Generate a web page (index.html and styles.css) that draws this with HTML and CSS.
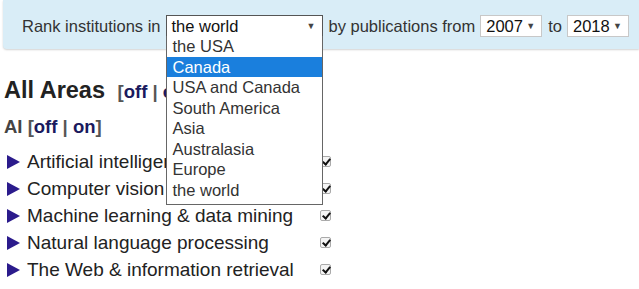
FILE: index.html
```html
<!DOCTYPE html>
<html>
<head>
<meta charset="utf-8">
<link rel="stylesheet" href="styles.css">
</head>
<body>
<div class="bar">
  <span class="label">Rank institutions in</span>
  <div class="sel region open">
    <span class="val">the world</span><span class="arrow">▼</span>
    <ul class="menu">
      <li>the USA</li>
      <li class="hl">Canada</li>
      <li>USA and Canada</li>
      <li>South America</li>
      <li>Asia</li>
      <li>Australasia</li>
      <li>Europe</li>
      <li>the world</li>
    </ul>
  </div>
  <span class="label">by publications from</span>
  <div class="sel year"><span class="val">2007</span><span class="arrow">▼</span></div>
  <span class="label">to</span>
  <div class="sel year"><span class="val">2018</span><span class="arrow">▼</span></div>
</div>
<div class="main">
  <h2 class="title">All Areas <span class="toggle">[<a>off</a> | <a>on</a>]</span></h2>
  <div class="sub">AI <span class="toggle">[<a>off</a> | <a>on</a>]</span></div>
  <ul class="areas">
    <li><span class="tri"></span><span class="name">Artificial intelligence</span><span class="cb"></span></li>
    <li><span class="tri"></span><span class="name">Computer vision</span><span class="cb"></span></li>
    <li><span class="tri"></span><span class="name">Machine learning &amp; data mining</span><span class="cb"></span></li>
    <li><span class="tri"></span><span class="name">Natural language processing</span><span class="cb"></span></li>
    <li><span class="tri"></span><span class="name">The Web &amp; information retrieval</span><span class="cb"></span></li>
  </ul>
</div>
</body>
</html>
```
FILE: styles.css
```css
* { box-sizing: border-box; }
body {
  margin: 0;
  font-family: "Liberation Sans", Arial, sans-serif;
  color: #222;
  background: #fff;
  overflow: hidden;
}
.bar {
  margin-left: 3px;
  height: 49px;
  background: #d9edf7;
  border-bottom-left-radius: 4px;
  box-shadow: 0 1px 2px rgba(0,0,0,0.18);
  display: flex;
  align-items: center;
  padding: 3px 0 0 19px;
  font-size: 16.5px;
  color: #333;
  position: relative;
  z-index: 2;
}
.label { margin-right: 5px; }
.sel {
  position: relative;
  display: flex;
  align-items: center;
  justify-content: space-between;
  height: 22px;
  background: #fff;
  border: 1px solid #c8c8c8;
  padding: 0 6px 0 5px;
  margin-right: 6px;
  font-size: 16.5px;
  color: #111;
}
.region { width: 157px; border-color: #555; }
.year { width: 62px; }
.arrow { font-size: 9px; color: #444; }
.menu {
  position: absolute;
  top: 20px;
  left: -1px;
  width: 157px;
  margin: 0;
  padding: 0 0 3px 0;
  list-style: none;
  background: #fff;
  border: 1px solid #666;
  border-top: none;
  z-index: 5;
}
.menu li {
  height: 20.57px;
  line-height: 20.5px;
  padding-left: 6px;
  color: #333;
}
.menu li.hl { background: #1a7fdd; color: #fff; }
.main { padding: 0 0 0 4px; }
.title {
  margin: 27px 0 0 0;
  font-size: 23.5px;
  font-weight: bold;
  color: #222;
  line-height: 28px;
}
.toggle { font-size: 18.5px; margin-left: 6px; color: #555; }
.toggle a { color: #1a1a5e; }
.sub {
  margin-top: 10px;
  font-size: 18.5px;
  font-weight: bold;
  color: #444;
  line-height: 22px;
}
.sub .toggle { margin-left: 0; }
.areas {
  list-style: none;
  margin: 10px 0 0 0;
  padding: 0;
}
.areas li {
  display: flex;
  align-items: center;
  height: 27px;
  font-size: 19px;
  color: #222;
}
.tri {
  width: 0; height: 0;
  border-top: 7px solid transparent;
  border-bottom: 7px solid transparent;
  border-left: 13px solid #2b1b8c;
  margin: 0 7px 0 3px;
}
.name { width: 293px; }
.cb {
  width: 11px; height: 11px;
  border: 1px solid #aaa;
  border-radius: 2px;
  background: #f4f4f4;
  position: relative;
}
.cb::after {
  content: "";
  position: absolute;
  left: 3px; top: 0px;
  width: 3px; height: 6px;
  border: solid #111;
  border-width: 0 2px 2px 0;
  transform: rotate(40deg);
}
```
